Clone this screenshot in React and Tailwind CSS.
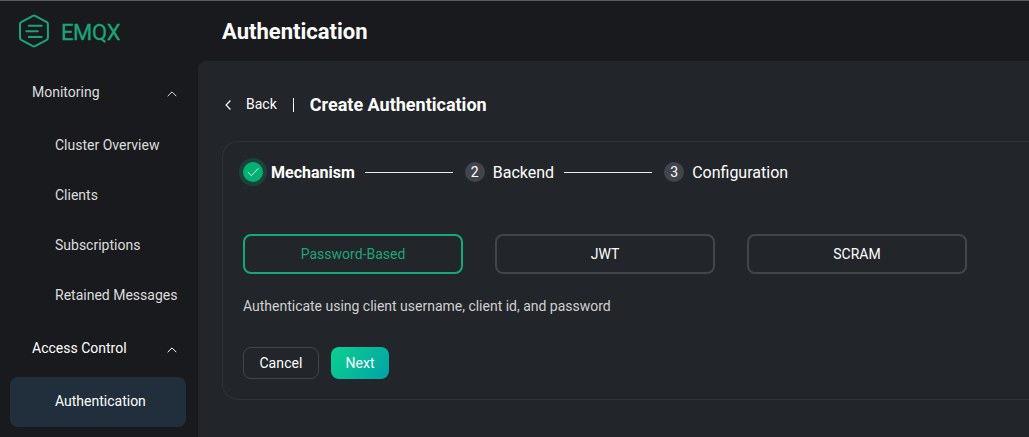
function Chevron({ className }) {
  return (
    <svg className={className} width="10" height="6" viewBox="0 0 10 6" fill="none" stroke="currentColor" strokeWidth="1">
      <path d="M0.7 5.2 L5 0.9 L9.3 5.2" />
    </svg>
  );
}

function Logo() {
  return (
    <svg className="-mt-px" width="32" height="34" viewBox="0 0 32 34" fill="none" stroke="#1ba477" strokeWidth="2" strokeLinejoin="round" strokeLinecap="round">
      <path d="M14.9 1.9 Q16 1.3 17.1 1.9 L28.8 8.2 Q29.9 8.8 29.9 10 V24.1 Q29.9 25.3 28.8 25.9 L17.1 32.2 Q16 32.8 14.9 32.2 L3.2 25.9 Q2 25.3 2 24.1 V10 Q2 8.8 3.2 8.2 Z" />
      <path d="M10.8 11.8 H23.7 M8.4 17.3 H19.8 M10.8 23 H23.7" />
    </svg>
  );
}

function Group({ label, items, active, className }) {
  return (
    <section>
      <div className={`flex h-14 items-center justify-between pr-[21px] pl-8 ${className}`}>
        <span className="relative top-[-1px]">{label}</span>
        <Chevron className="mt-px" />
      </div>
      {items.map((item) => (
        <div
          key={item}
          className={`mr-3 ml-2.5 flex h-[50px] items-center rounded-lg pl-[45px] ${item === active ? "bg-[#202f3b] text-white" : "text-[#dcdddd]"}`}
        >
          <span className="relative top-[-1px]">{item}</span>
        </div>
      ))}
    </section>
  );
}

function Step({ number, label, done }) {
  return (
    <div className="flex items-center gap-2">
      {done ? (
        <span className="flex size-5 items-center justify-center rounded-full bg-[#00b173] ring-4 ring-[#1e4039]">
          <svg width="12" height="10" viewBox="0 0 12 10" fill="none" stroke="#d5f5e8" strokeWidth="1">
            <path d="M0.7 5 L4.4 8.7 L11.2 1.4" />
          </svg>
        </span>
      ) : (
        <span className="flex size-5 items-center justify-center rounded-full bg-[#42454d] text-sm leading-5 text-white">
          {number}
        </span>
      )}
      <span className={`pt-0.5 text-base leading-6 text-white ${done ? "font-bold" : ""}`}>{label}</span>
    </div>
  );
}

const OPTIONS = ["Password-Based", "JWT", "SCRAM"];

export default function App() {
  return (
    <div className="flex h-[437px] w-[1029px] overflow-hidden border-t border-[#5a5b5e] bg-[#191a1d] font-['Roboto',sans-serif] text-sm">
      <aside className="w-[198px] shrink-0">
        <div className="flex h-16 items-center gap-[11px] pb-[3px] pl-[18px]">
          <Logo />
          <span className="pt-0.5 text-[22px] leading-8 tracking-[-0.4px] text-[#1ba477] [-webkit-text-stroke:0.3px_#1ba477]">EMQX</span>
        </div>
        <Group
          label="Monitoring"
          className="text-[#dcdddd]"
          items={["Cluster Overview", "Clients", "Subscriptions", "Retained Messages"]}
        />
        <Group label="Access Control" className="text-white" items={["Authentication"]} active="Authentication" />
      </aside>

      <div className="flex min-w-0 flex-1 flex-col">
        <header className="flex h-[60px] shrink-0 items-center pt-0.5 pl-6">
          <h1 className="text-[22px] leading-8 font-bold text-white">Authentication</h1>
        </header>
        <main className="flex-1 rounded-tl-lg bg-[#222529] pt-[31px] pl-6">
          <div className="flex h-6 items-center text-white">
            <svg className="mt-0.5 ml-[3px]" width="6" height="10" viewBox="0 0 6 10" fill="none" stroke="currentColor" strokeWidth="1.2">
              <path d="M5.4 0.5 L1.1 5 L5.4 9.5" />
            </svg>
            <span className="ml-[15px]">Back</span>
            <span className="mt-px ml-4 h-3.5 w-px bg-white" />
            <h2 className="mt-0.5 ml-4 text-lg leading-6 font-bold">Create Authentication</h2>
          </div>

          <div className="mt-[25px] h-[259px] rounded-l-2xl border-y border-l border-[#303338] pl-5">
            <div className="flex h-[60px] items-center">
              <Step label="Mechanism" done />
              <span className="mr-3 ml-2.5 h-px w-[88px] bg-[#e8f0ee]" />
              <Step number="2" label="Backend" />
              <span className="mr-3 ml-2.5 h-px w-[88px] bg-[#e8f0ee]" />
              <Step number="3" label="Configuration" />
            </div>
            <div className="mt-8 flex gap-8">
              {OPTIONS.map((option, i) => (
                <div
                  key={option}
                  className={`flex h-10 w-[220px] items-center justify-center rounded-lg border-2 ${i === 0 ? "border-[#15a878] text-[#1ca576]" : "border-[#42454a] text-white"}`}
                >
                  {option}
                </div>
              ))}
            </div>
            <p className="mt-[22px] leading-5 tracking-[-0.01px] text-[#cfd0d1]">Authenticate using client username, client id, and password</p>
            <div className="mt-[31px] flex gap-3 text-white">
              <button className="h-8 w-[76px] rounded-lg border border-[#42454a] tracking-[0.1px]">Cancel</button>
              <button className="h-8 w-[58px] rounded-lg bg-[linear-gradient(127deg,#0bd18e_0%,#02a2a8_100%)]">Next</button>
            </div>
          </div>
        </main>
      </div>
    </div>
  );
}
